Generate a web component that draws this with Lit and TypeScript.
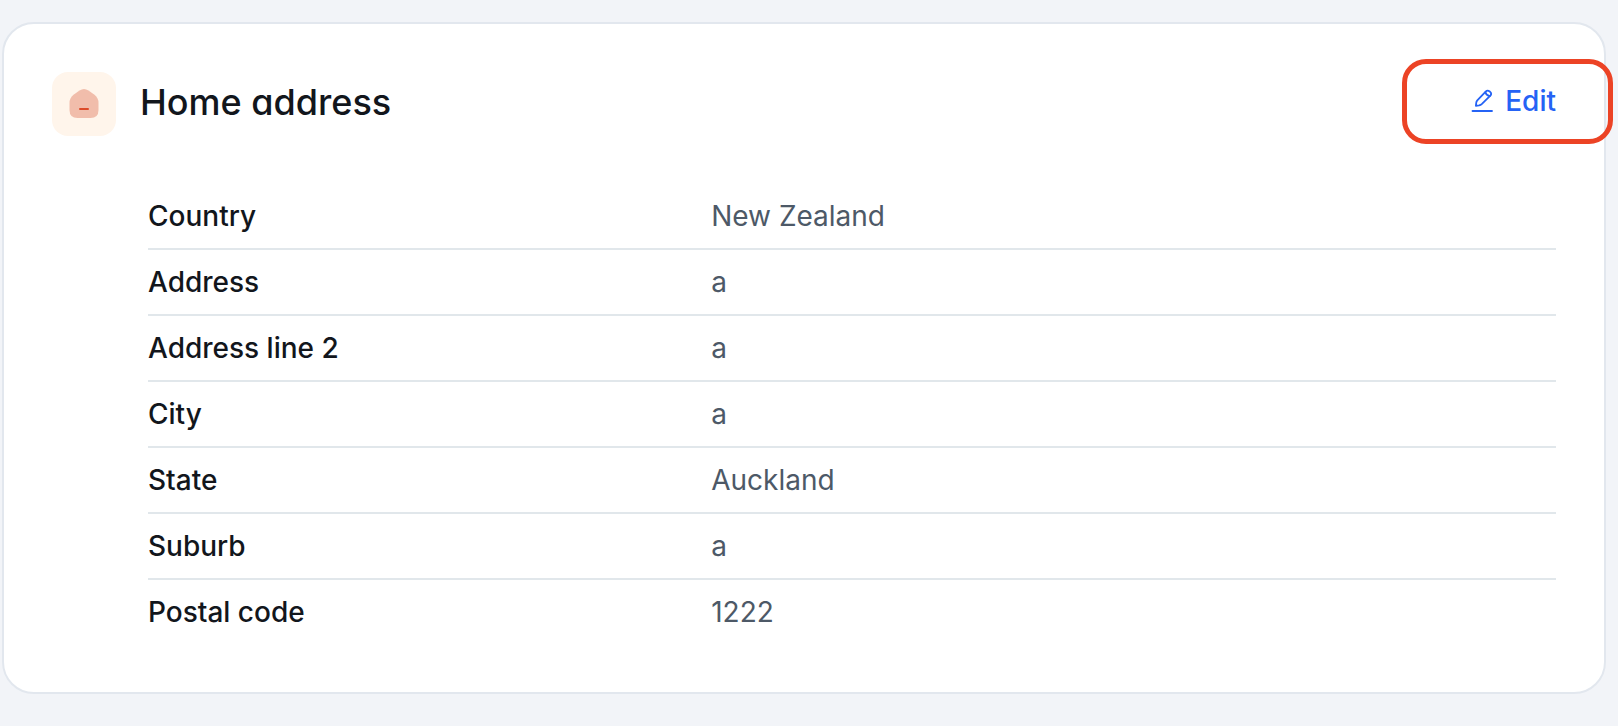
import { LitElement, html, css } from "lit";
import { customElement, state } from "lit/decorators.js";

interface Field {
  label: string;
  value: string;
}

@customElement("app-root")
export class AppRoot extends LitElement {
  static styles = css`
    :host {
      display: block;
      box-sizing: border-box;
      min-height: 100vh;
      padding: 22px 12px 32px 2px;
      overflow: hidden;
      background: #f2f4f8;
      color: #12161c;
      font-family: Inter, "Liberation Sans", sans-serif;
      font-size: 28px;
      line-height: 34px;
    }
    .card {
      padding: 48px;
      background: #fff;
      border: 2px solid #e2e7ee;
      border-radius: 32px;
    }
    .header {
      display: flex;
      align-items: flex-start;
      gap: 24px;
      margin-bottom: 48px;
    }
    .tile {
      display: flex;
      flex: none;
      width: 64px;
      height: 64px;
      border-radius: 16px;
      background: #fff5eb;
    }
    .title {
      flex: 1;
      margin: 0;
      font-size: 36px;
      line-height: 60px;
      font-weight: 500;
      /* single-storey a */
      font-feature-settings: "cv11";
    }
    .edit {
      position: relative;
      display: flex;
      align-items: center;
      gap: 10px;
      padding: 12px 0;
      border: 0;
      background: none;
      color: #2563f5;
      font: inherit;
      font-weight: 500;
      cursor: pointer;
    }
    .edit::after {
      content: "";
      position: absolute;
      inset: -13px -57px -14px -69px;
      border: 5px solid #ec4325;
      border-radius: 24px;
      pointer-events: none;
    }
    .fields {
      width: calc(100% - 96px);
      margin-left: 96px;
      border-spacing: 0;
      table-layout: fixed;
    }
    .label,
    .value {
      padding: 15px 0;
      text-align: left;
      border-bottom: 2px solid #e1e7eb;
    }
    .label {
      width: 40%;
      font-weight: 500;
    }
    .value {
      color: #4d5967;
      font-weight: 400;
    }
    .row:last-child .label,
    .row:last-child .value {
      border-bottom: 0;
    }
  `;

  @state()
  private fields: Field[] = [
    { label: "Country", value: "New Zealand" },
    { label: "Address", value: "a" },
    { label: "Address line 2", value: "a" },
    { label: "City", value: "a" },
    { label: "State", value: "Auckland" },
    { label: "Suburb", value: "a" },
    { label: "Postal code", value: "1222" },
  ];

  render() {
    return html`
      <section class="card" aria-labelledby="title">
        <header class="header">
          <span class="tile">
            <svg width="64" height="64" viewBox="0 0 64 64" aria-hidden="true">
              <path
                fill="#f1bdab"
                d="M27.5 18.4Q32 15.4 36.5 18.4L42.5 22.8Q46.5 26 46.5 31V38Q46.5 46 38.5 46H25.5Q17.5 46 17.5 38V31Q17.5 26 21.5 22.8Z"
              />
              <path stroke="#dc4b29" stroke-width="2" stroke-linecap="round" d="M28 37H36" />
            </svg>
          </span>
          <h2 class="title" id="title">Home address</h2>
          <button class="edit" type="button">
            <svg
              width="24"
              height="24"
              viewBox="0 0 24 24"
              fill="none"
              stroke="currentColor"
              stroke-width="1.8"
              stroke-linecap="round"
              stroke-linejoin="round"
              aria-hidden="true"
            >
              <path d="M1.5 22H21" />
              <path d="M4.9 16.8L5.2 14Q5.3 12.6 6.3 11.4L14.9 2.4C16.9 0.4 21.6 3.4 19.6 6.4L10.7 15.2Q9.7 16.1 8.1 16.4Z" />
              <path d="M14.4 3.2Q15.2 6.4 18.9 7.1" />
            </svg>
            Edit
          </button>
        </header>
        <table class="fields" aria-labelledby="title">
          <tbody>
            ${this.fields.map(
              (field) => html`
                <tr class="row">
                  <th class="label" scope="row">${field.label}</th>
                  <td class="value">${field.value}</td>
                </tr>
              `
            )}
          </tbody>
        </table>
      </section>
    `;
  }
}
